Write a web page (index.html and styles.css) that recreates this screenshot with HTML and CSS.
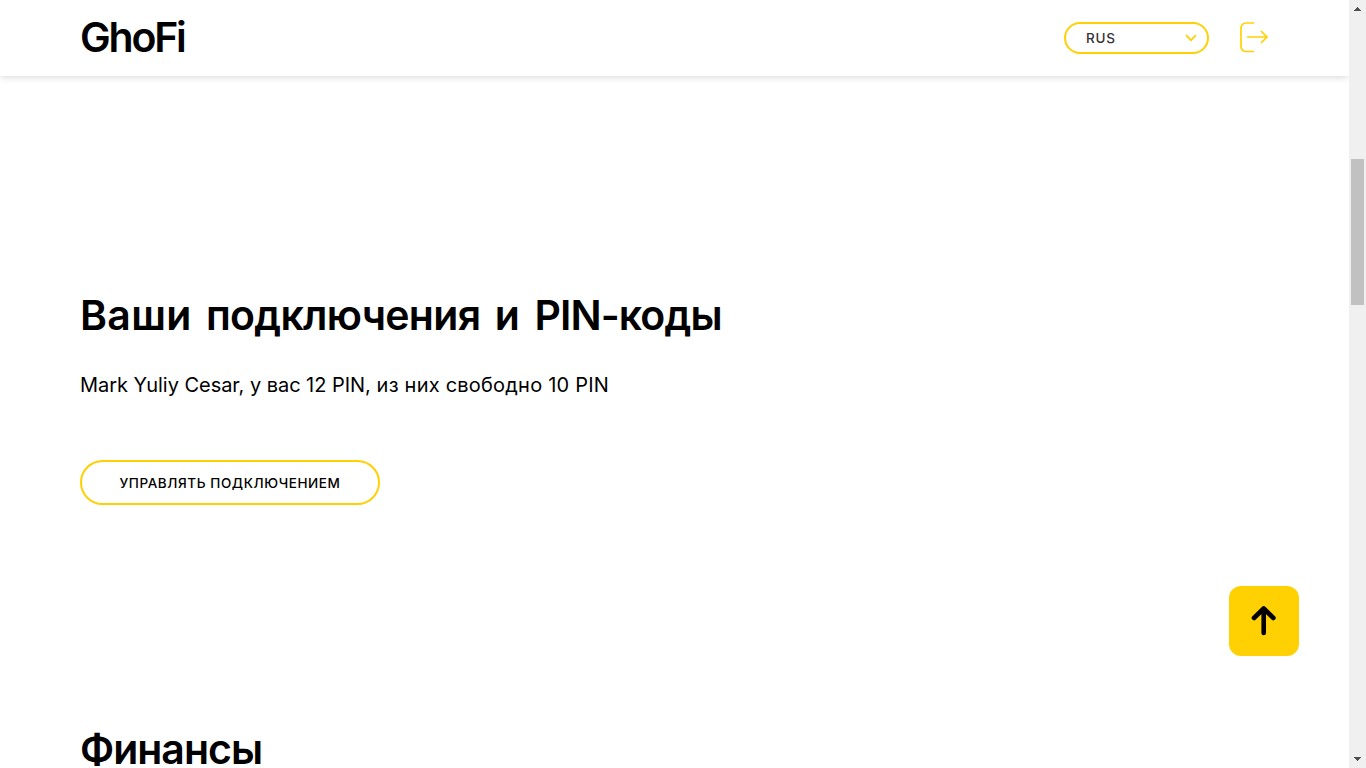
FILE: index.html
```html
<!DOCTYPE html>
<html lang="ru">
<head>
<meta charset="utf-8">
<title>GhoFi</title>
<link rel="stylesheet" href="styles.css">
</head>
<body>
<div class="page">
  <header class="header">
    <a class="logo">GhoFi</a>
    <div class="tools">
      <div class="lang"><span>RUS</span>
        <svg width="12" height="8" viewBox="0 0 12 8"><path d="M1 1.2 6 6.200 11 1.200"/></svg>
      </div>
      <svg class="logout" width="30" height="32" viewBox="0 0 30 32"><path d="M15 2H7a5 5 0 0 0-5 5v18.500a5 5 0 0 0 5 5H15M8 16h19.500M22 10l6 6-6 6"/></svg>
    </div>
  </header>
  <main class="content">
    <section class="pins">
      <h2 class="title"><span class="short">Ваши</span> <span class="long">подключения</span> <span class="short">и</span> <span class="codes">PIN-коды</span></h2>
      <p class="info"><span class="name">Mark Yuliy Cesar, у вас 12 PIN,</span> из них свободно 10 PIN</p>
      <a class="button"><span>УПРАВЛЯТЬ ПОДКЛЮЧЕНИЕМ</span></a>
    </section>
    <section class="finance"><h2 class="title"><span class="money">Финансы</span></h2></section>
  </main>
  <a class="to-top"><svg width="26" height="32" viewBox="0 0 26 32"><path d="M12.700 28V4M3 13 12.700 3.500 22.400 13"/></svg></a>
</div>
<aside class="scrollbar">
  <svg width="17" height="17" viewBox="0 0 17 17" shape-rendering="crispEdges"><path d="M8 7h1v1h1v1h1v1h1v1H5v-1h1V9h1V8h1z"/></svg>
  <i class="thumb"></i>
  <svg class="down" width="17" height="17" viewBox="0 0 17 17" shape-rendering="crispEdges"><path d="M5 6h7v1h-1v1h-1v1H9v1H8V9H7V8H6V7H5z"/></svg>
</aside>
</body>
</html>
```
FILE: styles.css
```css
* { box-sizing: border-box; }
body {
  margin: 0;
  height: 768px;
  overflow: hidden;
  display: flex;
  background: #fff;
  color: #000;
  font-family: Inter, "Noto Sans", sans-serif;
}
.page { width: 1349px; height: 768px; overflow: hidden; }
.header {
  height: 76px;
  padding: 0 80px;
  display: flex;
  justify-content: space-between;
  align-items: center;
  box-shadow: 0 0 8px rgba(0, 0, 0, .2);
}
.logo { font-size: 41px; line-height: 50px; font-weight: 600; letter-spacing: -2.2px; margin-top: -3px; }
.tools { display: flex; align-items: center; gap: 30px; }
.lang {
  width: 145px;
  height: 32px;
  padding: 0 10px 0 20px;
  border: 2px solid #ffd103;
  border-radius: 16px;
  display: flex;
  align-items: center;
  justify-content: space-between;
  font-size: 13.5px;
  font-weight: 500;
  letter-spacing: .8px;
  color: #333;
}
.lang span { margin-top: -1px; }
svg { display: block; fill: none; stroke: #ffd103; }
.lang svg { stroke-width: 1.7; }
.logout { stroke-width: 1.7; margin-top: -2px; }
.content { padding: 214px 80px 0; }
.title {
  margin: 0;
  height: 50px;
  font-size: 41px;
  line-height: 50px;
  font-weight: 600;
  word-spacing: 4px;
  white-space: nowrap;
}
.short { letter-spacing: .3px; }
.long { letter-spacing: -.7px; }
.codes { letter-spacing: -.9px; }
.money { letter-spacing: -1px; }
.info {
  margin: 30px 0 0;
  height: 30px;
  font-size: 20px;
  line-height: 30px;
  font-weight: 400;
  letter-spacing: .22px;
  white-space: nowrap;
}
.name { letter-spacing: -.04px; }
.button {
  margin-top: 60px;
  width: 300px;
  height: 45px;
  border: 2px solid #ffd103;
  border-radius: 23px;
  display: flex;
  align-items: center;
  justify-content: center;
  font-size: 13.5px;
  font-weight: 500;
  letter-spacing: .58px;
  white-space: nowrap;
}
.finance { margin-top: 219px; }
.to-top {
  position: fixed;
  left: 1229px;
  top: 586px;
  width: 70px;
  height: 70px;
  border-radius: 12px;
  background: #ffd103;
  display: flex;
  align-items: center;
  justify-content: center;
}
.to-top svg { stroke: #000; stroke-width: 4.600; stroke-linecap: round; stroke-linejoin: round; }
.scrollbar { width: 17px; height: 768px; background: #f0f0f0; display: flex; flex-direction: column; }
.scrollbar svg { fill: #505050; stroke: none; }
.thumb { width: 13px; height: 146px; margin: 142px 0 0 2px; background: #c1c1c1; }
.down { margin-top: auto; }
```
